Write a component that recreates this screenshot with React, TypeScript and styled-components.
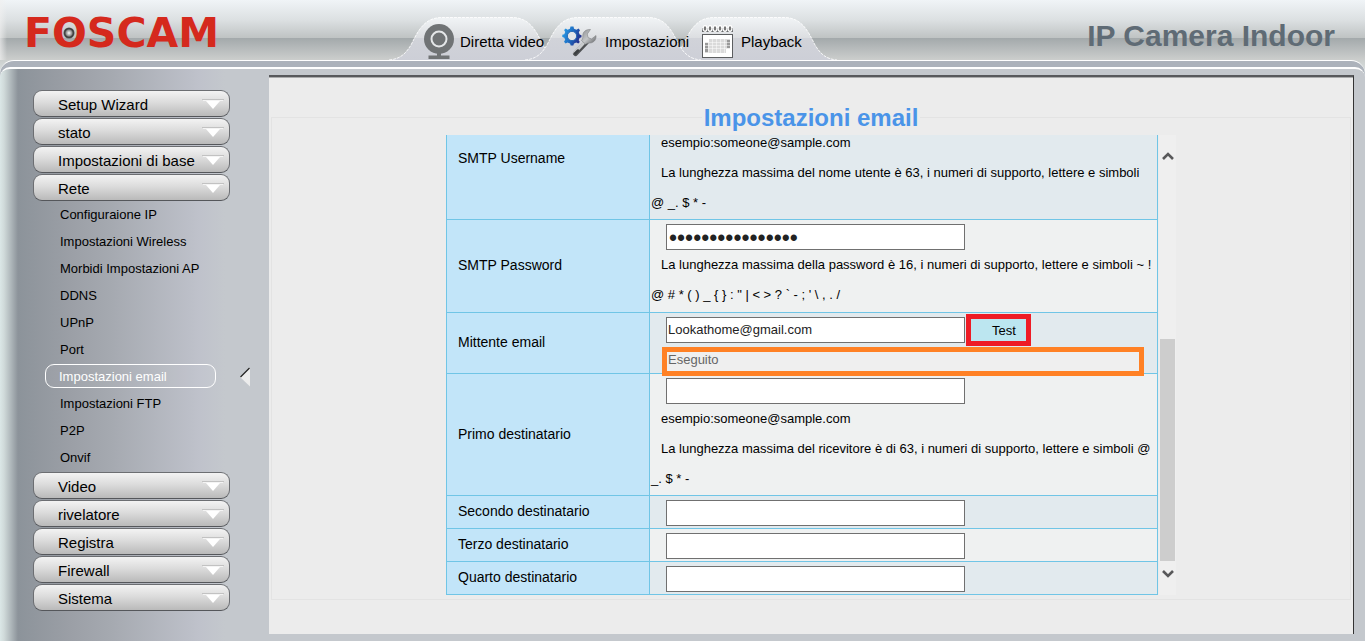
import React from "react";
import styled, { createGlobalStyle, css } from "styled-components";

const GlobalStyle = createGlobalStyle`
  *, *::before, *::after { box-sizing: border-box; }
  body {
    margin: 0;
    background: #c4c8cd;
    color: #000;
    font-family: "Liberation Sans", Arial, sans-serif;
    font-size: 13px;
  }
  button, input { font-family: inherit; }
`;

const Page = styled.div`
  min-height: 100vh;
  display: flex;
  flex-direction: column;
  background: linear-gradient(to bottom, #cbcfce 60px, #dfe5e5 76px);
`;

/* ---------- header ---------- */

const Header = styled.header`
  display: grid;
  grid-template-columns: 389px auto 1fr;
  height: 60px;
  background:
    linear-gradient(to right, rgba(240, 240, 240, 0.7), rgba(240, 240, 240, 0) 7px),
    linear-gradient(to bottom, #f0f4f7 0, #dce0e2 20px, #bfc3c3 38px, #a3a9ab 38px, #cccecd 60px);
`;

const Logo = styled.a`
  position: relative;
  align-self: start;
  justify-self: start;
  margin: 11px 0 0 24px;
  color: #d5291d;
  font: bold 41px/44px "DejaVu Sans", sans-serif;
  text-decoration: none;
`;

const Lens = styled.svg`
  position: absolute;
  left: 39px;
  top: 16px;
`;

const Nav = styled.nav`
  display: flex;
  align-items: flex-end;
`;

const Tab = styled.a`
  position: relative;
  display: flex;
  align-items: center;
  width: 176px;
  height: 43px;
  padding: 6px 0 0 35px;
  color: #000;
  font-size: 15px;
  text-decoration: none;
  white-space: nowrap;
  & + & { margin-left: -40px; }
`;

const TabShape = styled.svg<{ $active?: boolean }>`
  position: absolute;
  left: 0;
  top: 0;
  z-index: ${(p) => (p.$active ? 1 : 0)};
`;

const TabIcon = styled.span<{ $wide?: boolean }>`
  position: relative;
  z-index: 2;
  display: flex;
  justify-content: center;
  flex: none;
  width: ${(p) => (p.$wide ? 39 : 30)}px;
  margin-right: 6px;
`;

const TabLabel = styled.span`
  position: relative;
  z-index: 2;
  padding-bottom: 1px;
`;

const Product = styled.div`
  justify-self: end;
  align-self: center;
  margin: 12px 30px 0 0;
  color: #5f6b75;
  font-size: 30px;
  font-weight: bold;
  line-height: 36px;
  white-space: nowrap;
`;

/* ---------- frame ---------- */

const Frame = styled.div`
  flex: 1;
  display: flex;
  flex-direction: column;
  padding-top: 6px;
  border-top: 1px solid #fff;
  border-radius: 14px 14px 0 0;
  background: #acb2bb;
`;

const Body = styled.div`
  flex: 1;
  display: flex;
  border-top: 2px solid #fff;
  border-radius: 10px 10px 0 0;
  background: linear-gradient(
    to right,
    #dbe7e7 0,
    #d0dada 4px,
    #8c939a 18px,
    #9b9fa6 70px,
    #a5a9b0 110px,
    #bfc2cb 200px,
    #c4c8cd 225px
  );
`;

const Sidebar = styled.nav`
  flex: none;
  width: 269px;
  padding: 21px 39px 24px 33px;
`;

const MenuItem = styled.button`
  display: flex;
  align-items: center;
  justify-content: space-between;
  width: 100%;
  height: 27px;
  margin: 0 0 1px;
  padding: 2px 5px 0 24px;
  border: 1px solid #6c6e72;
  border-bottom-color: #55575b;
  border-radius: 9px;
  background: linear-gradient(#f3f3f3, #dcdcdc 45%, #bababa);
  color: #000;
  font-size: 15px;
  text-align: left;
  cursor: pointer;
`;

const SubMenu = styled.ul`
  margin: 0;
  padding: 0;
  list-style: none;
`;

const SubItem = styled.li`
  position: relative;
  padding: 0 14px 3px 12px;
`;

const SubLink = styled.a<{ $active?: boolean }>`
  display: block;
  height: 24px;
  padding-left: 15px;
  color: #000;
  font-size: 13px;
  line-height: 26px;
  text-decoration: none;
  ${(p) =>
    p.$active &&
    css`
      padding-left: 13px;
      border: 1px solid #fff;
      border-radius: 9px;
      background: rgba(255, 255, 255, 0.06);
      color: #fff;
      line-height: 23px;
    `}
`;

const Pointer = styled.svg`
  position: absolute;
  right: -20px;
  top: 3px;
`;

/* ---------- content ---------- */

const Panel = styled.main`
  flex: 1;
  min-width: 0;
  margin: 6px 11px 7px 0;
  padding: 25px 2px 34px 2px;
  border-top: 2px solid #58595c;
  border-right: 1px solid #333;
  box-shadow: inset 0 1px 0 #aaabac;
  background: #ececec;
`;

const Group = styled.fieldset`
  min-width: 0;
  margin: 0;
  padding: 3px 0 4px;
  border: 1px solid #e3e3e3;
`;

const Title = styled.legend`
  margin: 0 auto;
  padding: 2px 2px 0;
  color: #4a94e8;
  font-size: 24px;
  font-weight: bold;
  line-height: 28px;
`;

const Scroller = styled.div`
  display: flex;
  width: 730px;
  max-width: 100%;
  height: 460px;
  margin: 0 auto;
  overflow: hidden;
`;

const Viewport = styled.div`
  flex: 1;
  display: flex;
  flex-direction: column;
  justify-content: flex-end;
  overflow: hidden;
`;

const ScrollBar = styled.div`
  flex: none;
  display: flex;
  flex-direction: column;
  align-items: center;
  justify-content: space-between;
  width: 17px;
  margin-left: 1px;
  padding: 16px 0;
  background: #efefef;
`;

const Thumb = styled.div`
  width: 15px;
  height: 222px;
  margin: auto 0 8px;
  background: #cdcdcd;
`;

const Table = styled.table`
  flex: none;
  width: 100%;
  border: solid #70c5e6;
  border-width: 0 1px 1px;
  border-spacing: 0;
`;

const Row = styled.tr<{ $height: number }>`
  height: ${(p) => p.$height}px;
  background: #eff1f1;
  &:nth-child(odd) { background: #e2eaee; }
`;

const LabelCell = styled.th`
  width: 203px;
  padding: 0 0 2px 11px;
  border-top: 1px solid #70c5e6;
  border-right: 1px solid #70c5e6;
  background: #c2e5f9;
  font-size: 14px;
  font-weight: normal;
  text-align: left;
`;

const FieldCell = styled.td`
  padding: 4px 0 0 1px;
  border-top: 1px solid #70c5e6;
  vertical-align: top;
`;

const FieldLine = styled.div`
  display: flex;
  height: 26px;
  padding-left: 15px;
`;

const TextBox = styled.input`
  width: 299px;
  height: 26px;
  padding: 0 1px 2px;
  border: 1px solid #707070;
  border-radius: 0;
  background: #fff;
  color: #222;
  font-size: 13px;
  &[type="password"] {
    padding: 2px 2px 0;
    font-size: 23px;
  }
`;

const Hint = styled.p`
  margin: 0;
  line-height: 30px;
  text-indent: 10px;
  white-space: nowrap;
`;

const TestButton = styled.button`
  position: relative;
  z-index: 1;
  width: 65px;
  height: 32px;
  margin: -3px 0 -3px 1px;
  padding: 0 0 0 11px;
  border: 5px solid #ee1c25;
  background: #bce6f0;
  color: #000;
  font-size: 13px;
`;

const Result = styled.input`
  position: relative;
  z-index: 1;
  display: block;
  width: 482px;
  height: 29px;
  margin: 4px 0 -3px 11px;
  padding: 0 1px 4px;
  border: 5px solid #ff8125;
  background: #efefef;
  color: #666;
  font-size: 13px;
`;

/* ---------- drawings ---------- */

const TabBackground = ({ id, active }: { id: string; active?: boolean }) => (
  <TabShape $active={active} width="176" height="43" viewBox="0 0 176 43" aria-hidden="true">
    <defs>
      <linearGradient id={id} x1="0" y1="0" x2="0" y2="1">
        <stop offset="0" stopColor="#f1f4f6" />
        <stop offset="0.48" stopColor="#dcdee1" />
        <stop offset="0.49" stopColor="#d1d3d9" />
        <stop offset="1" stopColor="#cdcfd7" />
      </linearGradient>
    </defs>
    <path
      d="M0 43C12 42 17 36 22 28C29 14 35 1 52 .5H124C141 1 147 14 154 28C159 36 164 42 176 43Z"
      fill={`url(#${id})`}
    />
    <path
      d="M0 43C12 42 17 36 22 28C29 14 35 1 52 .5H124C141 1 147 14 154 28C159 36 164 42 176 43"
      fill="none"
      stroke="#fff"
      strokeWidth="1"
      strokeDasharray="3 1"
      opacity="0.85"
    />
  </TabShape>
);

const WebcamIcon = () => (
  <svg width="30" height="36" viewBox="0 0 30 36" aria-hidden="true">
    <circle cx="15" cy="15" r="15" fill="#707375" />
    <circle cx="15" cy="15" r="7.5" fill="#707375" stroke="#e4e6e8" strokeWidth="2" />
    <path d="M13 29h4v2.500h8.500V35h-21v-3.500H13z" fill="#707375" />
  </svg>
);

const SettingsIcon = () => (
  <svg width="35" height="31" viewBox="0 0 35 31" aria-hidden="true">
    <defs>
      <linearGradient id="gearFill" x1="0" y1="0" x2="1" y2="0.4">
        <stop offset="0" stopColor="#2da5ec" />
        <stop offset="0.55" stopColor="#1f6fc4" />
        <stop offset="1" stopColor="#23338f" />
      </linearGradient>
      <linearGradient id="steel" x1="0" y1="0" x2="1" y2="1">
        <stop offset="0" stopColor="#8e9092" />
        <stop offset="0.5" stopColor="#c4c6c8" />
        <stop offset="1" stopColor="#5b5d60" />
      </linearGradient>
    </defs>
    <path
      d="M9.500 .5L11.500 .5L12 2.800L14.500 3.800L16.500 2.500L18 4.200L16.800 6.200L17.600 8.500L19.500 9.200V11.200L17.500 12L16.700 14.200L17.800 16L16.300 17.500L14.300 16.400L12 17.400L11.300 19.500H8.700L8 17.400L5.500 16.400L3.600 17.500L2 15.800L3.200 13.800L2.300 11.800L.3 11V8.800L2.300 8.200L3.200 6L2.100 4.100L3.700 2.500L5.600 3.700L7.900 2.800L8.500 .5Z"
      fill="url(#gearFill)"
    />
    <circle cx="10" cy="10" r="4.600" fill="#e4e6e9" stroke="#1b5fae" strokeWidth="0.800" />
    <path d="M13.500 27.500L24.500 16" stroke="#4e5053" strokeWidth="5" strokeLinecap="round" />
    <path d="M12.800 26.500L24 14.500" stroke="#c9cbcd" strokeWidth="3.200" strokeLinecap="round" />
    <path d="M13 27.500L16 24.500" stroke="#3c3e41" strokeWidth="2.500" strokeLinecap="round" />
    <path
      d="M28.500 3.500C24 3 20.500 6 20.800 10C21 12 20.300 13.500 19.500 14.500L23.500 18.300C25 17.200 26.500 17 28 17C32 16.800 34.500 13.500 34 9.500L29.500 13L26 11.500L25.300 8Z"
      fill="url(#steel)"
      stroke="#77797b"
      strokeWidth="0.500"
    />
  </svg>
);

const CalendarIcon = () => (
  <svg width="35" height="33" viewBox="-4 0 35 33" aria-hidden="true">
    <path d="M0 3h31v4H0z" fill="#696b6d" />
    {[3, 8, 13, 18, 23, 28].map((x) => (
      <ellipse key={x} cx={x} cy="3.500" rx="1.900" ry="2.800" fill="#777" stroke="#fff" strokeWidth="1.300" />
    ))}
    <rect x="0.500" y="9.500" width="30" height="23" fill="#fff" stroke="#5c5e60" />
    <path d="M7 14h21v10h-4v4H3V17h4z" fill="#dadada" />
    <path d="M3 18h3v9H3zM25 15h3v8h-3z" fill="#999" />
    <path
      d="M6.500 14v14M10.500 14v14M14.500 14v14M18.500 14v14M22.500 14v14M3 17.500h25M3 20.500h25M3 23.500h25"
      stroke="#fff"
      strokeWidth="0.500"
    />
  </svg>
);

const DropMark = () => (
  <svg width="22" height="13" viewBox="0 0 22 13" aria-hidden="true">
    <path d="M0 1.500h22" stroke="#c2c2c2" />
    <path d="M1 2.500h20" stroke="#f4f4f4" />
    <path d="M4 3h14l-7 8z" fill="#fff" />
  </svg>
);

const Chevron = ({ up }: { up?: boolean }) => (
  <svg width="12" height="10" viewBox="0 0 12 10" aria-hidden="true">
    <path d={up ? "M1 8L6 3L11 8" : "M1 2L6 7L11 2"} fill="none" stroke="#58585a" strokeWidth="2.600" />
  </svg>
);

/* ---------- data ---------- */

const network = [
  "Configuraione IP",
  "Impostazioni Wireless",
  "Morbidi Impostazioni AP",
  "DDNS",
  "UPnP",
  "Port",
  "Impostazioni email",
  "Impostazioni FTP",
  "P2P",
  "Onvif",
];

const Menu = ({ label }: { label: string }) => (
  <MenuItem type="button">
    {label}
    <DropMark />
  </MenuItem>
);

type FieldProps = {
  id: string;
  label: string;
  height: number;
  value?: string;
  type?: string;
  action?: React.ReactNode;
  children?: React.ReactNode;
};

const Field = ({ id, label, height, value = "", type = "text", action, children }: FieldProps) => (
  <Row $height={height}>
    <LabelCell scope="row">
      <label htmlFor={id}>{label}</label>
    </LabelCell>
    <FieldCell>
      <FieldLine>
        <TextBox id={id} type={type} defaultValue={value} />
        {action}
      </FieldLine>
      {children}
    </FieldCell>
  </Row>
);

export default function App() {
  return (
    <Page>
      <GlobalStyle />
      <Header>
        <Logo href="#">
          FOSCAM
          <Lens width="12" height="12" viewBox="0 0 12 12" aria-hidden="true">
            <defs>
              <radialGradient id="lens">
                <stop offset="0" stopColor="#fff" />
                <stop offset="0.55" stopColor="#8c8c8c" />
                <stop offset="0.75" stopColor="#3b3b3b" />
                <stop offset="1" stopColor="#555" />
              </radialGradient>
            </defs>
            <circle cx="6" cy="6" r="5.500" fill="url(#lens)" />
          </Lens>
        </Logo>
        <Nav>
          <Tab href="#">
            <TabBackground id="tabLive" />
            <TabIcon><WebcamIcon /></TabIcon>
            <TabLabel>Diretta video</TabLabel>
          </Tab>
          <Tab href="#">
            <TabBackground id="tabSettings" active />
            <TabIcon $wide><SettingsIcon /></TabIcon>
            <TabLabel>Impostazioni</TabLabel>
          </Tab>
          <Tab href="#">
            <TabBackground id="tabPlayback" />
            <TabIcon $wide><CalendarIcon /></TabIcon>
            <TabLabel>Playback</TabLabel>
          </Tab>
        </Nav>
        <Product>IP Camera Indoor</Product>
      </Header>

      <Frame>
        <Body>
          <Sidebar>
            {["Setup Wizard", "stato", "Impostazioni di base", "Rete"].map((l) => (
              <Menu key={l} label={l} />
            ))}
            <SubMenu>
              {network.map((l) => {
                const active = l === "Impostazioni email";
                return (
                  <SubItem key={l}>
                    <SubLink href="#" $active={active}>{l}</SubLink>
                    {active && (
                      <Pointer width="10" height="20" viewBox="0 0 10 20" aria-hidden="true">
                        <path d="M0 10L10 0.500V19.500Z" fill="#ececec" />
                        <path d="M0.500 10L9.500 1" stroke="#222" strokeWidth="1.200" />
                      </Pointer>
                    )}
                  </SubItem>
                );
              })}
            </SubMenu>
            {["Video", "rivelatore", "Registra", "Firewall", "Sistema"].map((l) => (
              <Menu key={l} label={l} />
            ))}
          </Sidebar>

          <Panel>
            <Group>
              <Title>Impostazioni email</Title>
              <Scroller>
                <Viewport>
                  <Table>
                    <tbody>
                      <Field id="user" label="SMTP Username" height={122}>
                        <Hint>esempio:someone@sample.com</Hint>
                        <Hint>
                          La lunghezza massima del nome utente è 63, i numeri di supporto, lettere e simboli
                          <br />@ _. $ * -
                        </Hint>
                      </Field>
                      <Field id="pass" label="SMTP Password" height={93} type="password" value="password12345678">
                        <Hint>
                          La lunghezza massima della password è 16, i numeri di supporto, lettere e simboli ~ !
                          <br />
                          {"@ # * ( ) _ { } : \" | < > ? ` - ; ' \\ , . /"}
                        </Hint>
                      </Field>
                      <Field
                        id="sender"
                        label="Mittente email"
                        height={61}
                        value="Lookathome@gmail.com"
                        action={<TestButton type="button">Test</TestButton>}
                      >
                        <Result readOnly value="Eseguito" aria-label="Risultato del test" />
                      </Field>
                      <Field id="rcpt1" label="Primo destinatario" height={122}>
                        <Hint>esempio:someone@sample.com</Hint>
                        <Hint>
                          La lunghezza massima del ricevitore è di 63, i numeri di supporto, lettere e simboli @
                          <br />_. $ * -
                        </Hint>
                      </Field>
                      <Field id="rcpt2" label="Secondo destinatario" height={33} />
                      <Field id="rcpt3" label="Terzo destinatario" height={33} />
                      <Field id="rcpt4" label="Quarto destinatario" height={33} />
                    </tbody>
                  </Table>
                </Viewport>
                <ScrollBar>
                  <Chevron up />
                  <Thumb />
                  <Chevron />
                </ScrollBar>
              </Scroller>
            </Group>
          </Panel>
        </Body>
      </Frame>
    </Page>
  );
}
